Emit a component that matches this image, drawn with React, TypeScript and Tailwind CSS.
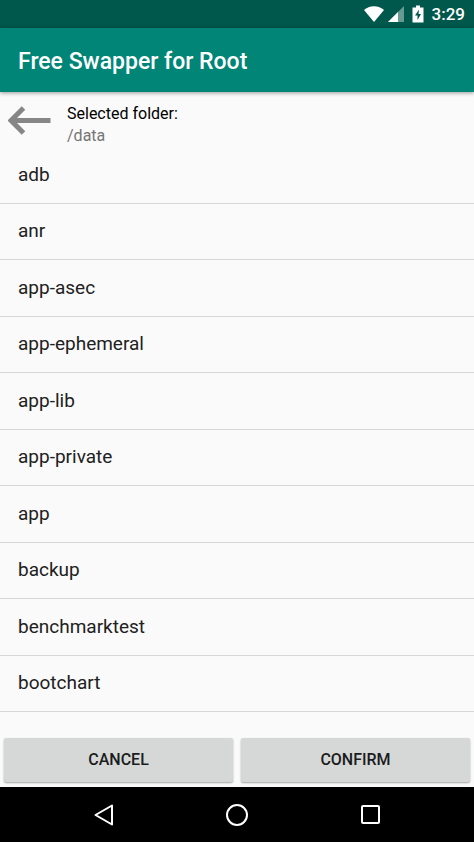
const folders = [
  "adb",
  "anr",
  "app-asec",
  "app-ephemeral",
  "app-lib",
  "app-private",
  "app",
  "backup",
  "benchmarktest",
  "bootchart",
];

const StatusBar = () => (
  <div className="flex h-7 items-center justify-end bg-[#00574b] pr-[9px] text-white">
    <svg width="20" height="16" viewBox="0 0 20 16" fill="currentColor">
      <path d="M10 16 0 4C2.600 1.800 6 .2 10 .2S17.400 1.800 20 4Z" />
    </svg>
    <svg className="ml-1" width="16" height="16" viewBox="0 0 16 16" fill="currentColor">
      <path d="M16 0V16H0Z" opacity="0.4" />
      <path d="M10 6V16H0Z" />
    </svg>
    <svg className="ml-2 mr-2" width="12" height="18" viewBox="0 0 12 18">
      <path d="M4 0.500H8V2.500H11.500V17.500H.5V2.500H4Z" fill="currentColor" />
      <path d="M7 4.500 3 10.500H5.500V15L9 9H6.500Z" fill="#00574b" />
    </svg>
    <span className="text-[17px] leading-5 font-medium">3:29</span>
  </div>
);

const FolderHeader = () => (
  <div className="flex px-2 pt-[11px]">
    <button type="button" aria-label="Parent folder" className="h-8 w-11 text-[#868686]">
      <svg width="44" height="34" viewBox="0 0 44 34" fill="none" stroke="currentColor" strokeWidth="5">
        <path d="M15.500 5 3 17.500 15.500 30M3 17.500H42.500" />
      </svg>
    </button>
    <div className="ml-[15px] text-base leading-[22px]">
      <p className="text-black">Selected folder:</p>
      <p className="text-[#757575]">/data</p>
    </div>
  </div>
);

const FolderList = () => (
  <ul className="flex flex-1 flex-col pb-[26px]">
    {folders.map((folder) => (
      <li key={folder} className="flex flex-1 border-b border-[#d6d6d6]">
        <button type="button" className="flex-1 px-[18px] text-left text-[19px] leading-6 text-[#212121]">
          {folder}
        </button>
      </li>
    ))}
  </ul>
);

const ActionButton = ({ label }: { label: string }) => (
  <button
    type="button"
    className="h-11 flex-1 rounded-xs bg-[#d6d8d7] text-base font-medium text-[#1b1c1c] shadow-[0_1px_2px_rgba(0,0,0,0.35)]"
  >
    {label}
  </button>
);

const NavBar = () => (
  <nav className="flex h-[55px] items-center justify-center gap-[111px] bg-black text-white">
    <button type="button" aria-label="Back">
      <svg width="22" height="24" viewBox="0 0 22 24" fill="none" stroke="currentColor" strokeWidth="2" strokeLinejoin="round">
        <path d="M20 2.500V21.500L3.500 12Z" />
      </svg>
    </button>
    <button type="button" aria-label="Home">
      <svg width="24" height="24" viewBox="0 0 24 24" fill="none" stroke="currentColor" strokeWidth="2">
        <circle cx="12" cy="12" r="10" />
      </svg>
    </button>
    <button type="button" aria-label="Recent apps">
      <svg width="22" height="24" viewBox="0 0 22 24" fill="none" stroke="currentColor" strokeWidth="2">
        <rect x="2" y="3" width="17" height="17" rx="1" />
      </svg>
    </button>
  </nav>
);

const App = () => {
  return (
    <div className="flex min-h-screen flex-col bg-[#fafafa] font-[Roboto,sans-serif]">
      <StatusBar />
      <header className="flex h-16 items-center bg-[#008577] px-[18px] pt-1 shadow-[0_1px_4px_rgba(0,0,0,0.4)]">
        <h1 className="text-[23px] leading-7 font-medium text-white">Free Swapper for Root</h1>
      </header>
      <main className="flex flex-1 flex-col">
        <FolderHeader />
        <FolderList />
        <div className="flex gap-2 px-1 pb-[5px]">
          <ActionButton label="CANCEL" />
          <ActionButton label="CONFIRM" />
        </div>
      </main>
      <NavBar />
    </div>
  );
};

export default App;
